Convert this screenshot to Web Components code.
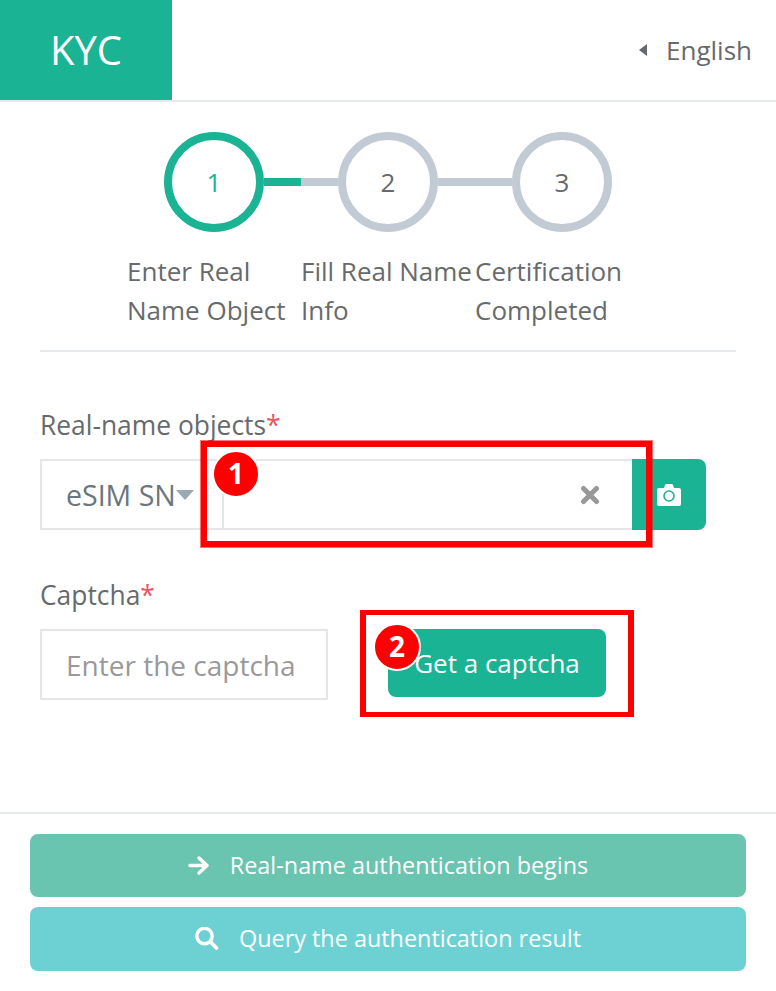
<!DOCTYPE html>
<html lang="en">
<head>
<meta charset="utf-8">
<title>KYC</title>
<style>
  html, body { margin: 0; background: #fff; }
  body { font-family: "Open Sans", sans-serif; font-size: 26px; color: #676a6c; }
</style>
</head>
<body>
<kyc-page>
  <kyc-header slot="header" title="KYC" lang-name="English"></kyc-header>
  <kyc-steps slot="steps">
    <kyc-step number="1" active progress>Enter Real Name Object</kyc-step>
    <kyc-step number="2">Fill Real Name Info</kyc-step>
    <kyc-step number="3" last>Certification Completed</kyc-step>
  </kyc-steps>
  <kyc-field slot="form" label="Real-name objects">
    <kyc-scan-input option="eSIM SN"></kyc-scan-input>
  </kyc-field>
  <kyc-field slot="form" label="Captcha">
    <kyc-captcha placeholder="Enter the captcha" action="Get a captcha"></kyc-captcha>
  </kyc-field>
  <kyc-action slot="actions" icon="arrow" color="#69c4b0" height="63">Real-name authentication begins</kyc-action>
  <kyc-action slot="actions" icon="search" color="#6dd1d4" height="64">Query the authentication result</kyc-action>
  <!-- red callouts drawn over the screenshot -->
  <kyc-callout slot="overlay" number="1" thick="6px" style="left:201px;top:441px;width:451px;height:106px;box-shadow:0 0 0 1px rgba(255,0,0,.55)" badge-x="5" badge-y="3"></kyc-callout>
  <kyc-callout slot="overlay" number="2" thick="5px 6px" style="left:360px;top:610px;width:274px;height:107px" badge-x="7" badge-y="8"></kyc-callout>
</kyc-page>

<script>
const ICONS = {
  arrow: `<svg width="22" height="22" viewBox="0 0 22 22" fill="none" stroke="#fff" stroke-width="3.500" stroke-linecap="round" stroke-linejoin="round"><path d="M2 10.500h17M11 3l8 7.500-8 7.500"/></svg>`,
  search: `<svg width="24" height="24" viewBox="0 0 24 24" fill="none" stroke="#fff" stroke-linecap="round"><circle cx="9.500" cy="9" r="7.700" stroke-width="3.400"/><path d="M15.500 15l6 6" stroke-width="3.800"/></svg>`,
};

class KycPage extends HTMLElement {
  constructor() {
    super();
    this.attachShadow({ mode: "open" });
    this.shadowRoot.innerHTML = `
      <style>
        :host { display: block; position: relative; width: 776px; height: 991px; overflow: hidden; }
        .divider { height: 2px; background: #e7eaec; }
        .steps { padding: 30px 0 20px 128px; }
        .inner-divider { margin: 0 40px; }
        .form { display: flex; flex-direction: column; gap: 46px; padding: 54px 40px 112px; }
        .actions { display: flex; flex-direction: column; gap: 10px; padding: 20px 30px; }
      </style>
      <slot name="header"></slot>
      <div class="steps"><slot name="steps"></slot></div>
      <div class="divider inner-divider"></div>
      <div class="form"><slot name="form"></slot></div>
      <div class="divider"></div>
      <div class="actions"><slot name="actions"></slot></div>
      <slot name="overlay"></slot>
    `;
  }
}

class KycHeader extends HTMLElement {
  constructor() {
    super();
    this.attachShadow({ mode: "open" });
  }
  connectedCallback() {
    this.shadowRoot.innerHTML = `
      <style>
        :host { display: flex; justify-content: space-between; align-items: center; height: 100px; border-bottom: 2px solid #e7eaec; }
        .logo { width: 172px; height: 100px; background: #1ab394; color: #fff; font-size: 40px; line-height: 100px; text-align: center; }
        .lang { display: flex; align-items: center; gap: 19px; padding-right: 24px; }
        .caret { border-style: solid; border-width: 6.5px 8px 6.5px 0; border-color: transparent #676a6c transparent transparent; }
      </style>
      <div class="logo">${this.getAttribute("title")}</div>
      <div class="lang"><span class="caret"></span><span>${this.getAttribute("lang-name")}</span></div>
    `;
  }
}

class KycSteps extends HTMLElement {
  constructor() {
    super();
    this.attachShadow({ mode: "open" });
    this.shadowRoot.innerHTML = `
      <style>:host { display: flex; }</style>
      <slot></slot>
    `;
  }
}

class KycStep extends HTMLElement {
  constructor() {
    super();
    this.attachShadow({ mode: "open" });
  }
  connectedCallback() {
    const n = this.getAttribute("number");
    const first = n === "1";
    const active = this.hasAttribute("active");
    const last = this.hasAttribute("last");
    const green = "#1ab394";
    const grey = "#c2cbd3";
    const afterBg = last ? "transparent" : active ? `linear-gradient(90deg, ${green} 37px, ${grey} 37px)` : grey;
    this.shadowRoot.innerHTML = `
      <style>
        :host { display: block; width: 174px; flex: none; }
        .head { display: flex; align-items: center; height: 100px; }
        .line { height: 8px; }
        .before { width: 36px; background: ${first ? "transparent" : grey}; }
        .after { width: 38px; background: ${afterBg}; }
        .circle { box-sizing: border-box; width: 100px; height: 100px; flex: none; border-radius: 50%; border: 8px solid ${active ? green : grey};
          display: flex; align-items: center; justify-content: center; color: ${active ? green : "#676a6c"}; }
        .label { margin: 20px 0 0 -1px; line-height: 39px; }
      </style>
      <div class="head">
        <div class="line before"></div>
        <div class="circle">${n}</div>
        <div class="line after"></div>
      </div>
      <div class="label"><slot></slot></div>
    `;
  }
}

class KycField extends HTMLElement {
  constructor() {
    super();
    this.attachShadow({ mode: "open" });
  }
  connectedCallback() {
    this.shadowRoot.innerHTML = `
      <style>
        :host { display: block; }
        label { display: block; line-height: 39px; margin-bottom: 14px; font-size: 26.400px; font-weight: 500; }
        i { font-style: normal; color: #ed5565; }
      </style>
      <label>${this.getAttribute("label")}<i>*</i></label>
      <slot></slot>
    `;
  }
}

class KycScanInput extends HTMLElement {
  constructor() {
    super();
    this.attachShadow({ mode: "open" });
  }
  connectedCallback() {
    this.shadowRoot.innerHTML = `
      <style>
        :host { display: flex; height: 71px; width: 666px; }
        .select { box-sizing: border-box; width: 182px; display: flex; align-items: center; padding-left: 24px; border: 2px solid #e5e6e7; border-right: 0; color: #6b7680; font-size: 28.500px; white-space: nowrap; }
        .select b { border-style: solid; border-width: 10px 9px 0; border-color: #9aa9b0 transparent transparent; }
        .input { box-sizing: border-box; flex: 1; display: flex; align-items: center; justify-content: flex-end; padding-right: 32px; border: 2px solid #e5e6e7; border-right: 0; }
        .btn { width: 74px; display: flex; align-items: center; justify-content: center; background: #1ab394; border-radius: 0 8px 8px 0; }
      </style>
      <div class="select"><span>${this.getAttribute("option")}</span><b></b></div>
      <div class="input">
        <svg width="20" height="20" viewBox="0 0 20 20" fill="none" stroke="#999" stroke-width="5" stroke-linecap="round"><path d="M3.500 3.500l13 13M16.500 3.500l-13 13"/></svg>
      </div>
      <div class="btn">
        <svg width="24" height="22" viewBox="0 0 24 22"><path fill="#fff" d="M2 4h5l1-3q.3-1 1.400-1h5.200q1.100 0 1.400 1l1 3h5q2 0 2 2v14q0 2-2 2H2q-2 0-2-2V6q0-2 2-2z"/><circle cx="12" cy="12" r="5" fill="none" stroke="#1ab394" stroke-width="1.600"/></svg>
      </div>
    `;
  }
}

class KycCaptcha extends HTMLElement {
  constructor() {
    super();
    this.attachShadow({ mode: "open" });
  }
  connectedCallback() {
    this.shadowRoot.innerHTML = `
      <style>
        :host { display: flex; align-items: flex-start; gap: 60px; height: 71px; }
        .input { box-sizing: border-box; width: 288px; height: 71px; display: flex; align-items: center; padding-left: 24px; border: 2px solid #e5e6e7; color: #999; font-size: 28px; white-space: nowrap; overflow: hidden; }
        .btn { width: 218px; height: 68px; display: flex; align-items: center; justify-content: center; background: #1ab394; color: #fff; border-radius: 8px; }
      </style>
      <div class="input">${this.getAttribute("placeholder")}</div>
      <div class="btn">${this.getAttribute("action")}</div>
    `;
  }
}

class KycAction extends HTMLElement {
  constructor() {
    super();
    this.attachShadow({ mode: "open" });
  }
  connectedCallback() {
    this.shadowRoot.innerHTML = `
      <style>
        :host { display: flex; align-items: center; justify-content: center; gap: 20px; height: ${this.getAttribute("height")}px; border-radius: 8px; background: ${this.getAttribute("color")}; color: #fff; font-size: 23.400px; }
        svg { display: block; }
        span { position: relative; top: -1px; }
      </style>
      ${ICONS[this.getAttribute("icon")]}
      <span><slot></slot></span>
    `;
  }
}

class KycCallout extends HTMLElement {
  constructor() {
    super();
    this.attachShadow({ mode: "open" });
  }
  connectedCallback() {
    this.shadowRoot.innerHTML = `
      <style>
        :host { display: block; position: absolute; box-sizing: border-box; border: solid #f00; border-width: ${this.getAttribute("thick")}; }
        .badge { position: absolute; left: ${this.getAttribute("badge-x")}px; top: ${this.getAttribute("badge-y")}px; box-sizing: border-box; width: 48px; height: 48px;
          border-radius: 50%; background: #f00; border: 2px solid #fff; color: #fff; font: 700 28px/43px "Open Sans", sans-serif; text-align: center; }
      </style>
      <div class="badge">${this.getAttribute("number")}</div>
    `;
  }
}

customElements.define("kyc-page", KycPage);
customElements.define("kyc-header", KycHeader);
customElements.define("kyc-steps", KycSteps);
customElements.define("kyc-step", KycStep);
customElements.define("kyc-field", KycField);
customElements.define("kyc-scan-input", KycScanInput);
customElements.define("kyc-captcha", KycCaptcha);
customElements.define("kyc-action", KycAction);
customElements.define("kyc-callout", KycCallout);
</script>
</body>
</html>
